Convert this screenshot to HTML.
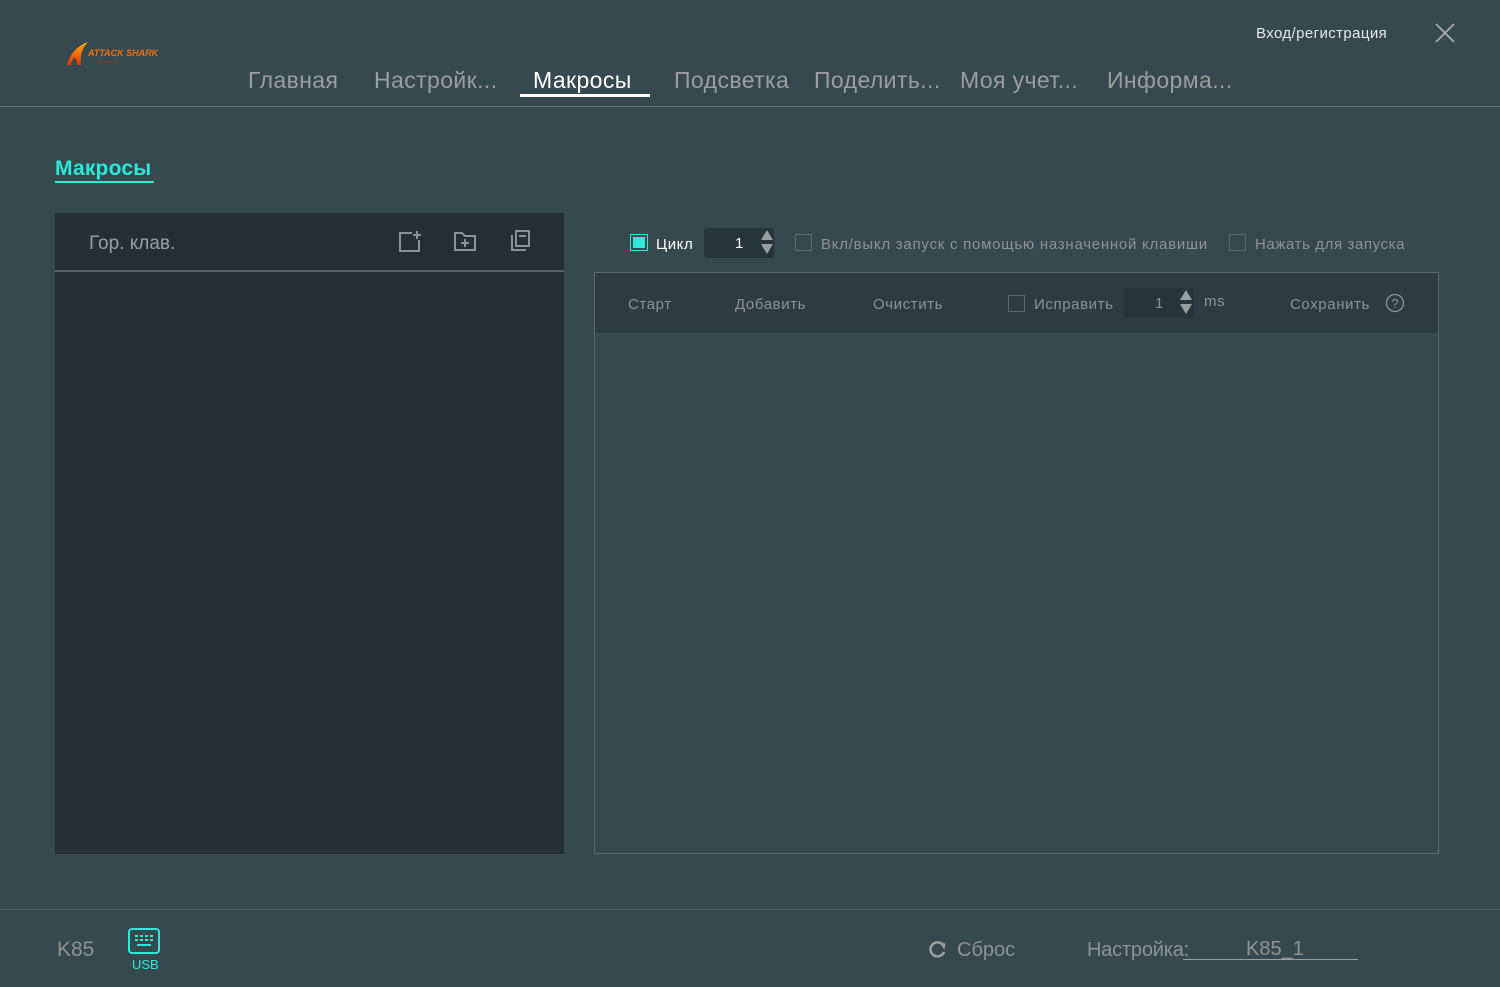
<!DOCTYPE html>
<html><head><meta charset="utf-8"><style>
*{margin:0;padding:0;box-sizing:border-box}
body{width:1500px;height:987px;background:#36494e;font-family:"Liberation Sans",sans-serif;position:relative;overflow:hidden;color:#9aa0a0}
.a{position:absolute;white-space:nowrap}
.nav{top:67px;font-size:23px;color:#9a9e9e;letter-spacing:0.4px}
.s{font-size:15px;letter-spacing:0.6px}
.cb{position:absolute;width:17px;height:17px;border:1px solid #5d6a6c}
</style></head><body>
<svg class="a" style="left:64px;top:40px" width="100" height="30" viewBox="0 0 100 30">
<defs><linearGradient id="g" x1="0" y1="0" x2="0" y2="1"><stop offset="0" stop-color="#ffb000"/><stop offset="1" stop-color="#e8300a"/></linearGradient></defs>
<path d="M3 25 C6 15 12 6 24 2 C18 8 16 16 17 25 L13 25 C13 20 12 18 10 18 C8 20 7 23 7 25Z" fill="url(#g)"/>
<text x="24" y="16" font-size="9" font-weight="bold" font-style="italic" fill="#f07010" font-family="Liberation Sans">ATTACK SHARK</text>
<path d="M34 22 h20" stroke="#c03010" stroke-width="1" stroke-dasharray="2 1"/>
</svg>
<div class="a nav" style="left:248px">Главная</div>
<div class="a nav" style="left:374px">Настройк...</div>
<div class="a nav" style="left:533px;color:#fff">Макросы</div>
<div class="a" style="left:520px;top:94px;width:130px;height:3px;background:#fff"></div>
<div class="a nav" style="left:674px">Подсветка</div>
<div class="a nav" style="left:814px">Поделить...</div>
<div class="a nav" style="left:960px">Моя учет...</div>
<div class="a nav" style="left:1107px">Информа...</div>
<div class="a" style="left:1256px;top:25px;font-size:15px;color:#e4e8e8;letter-spacing:0.4px">Вход/регистрация</div>
<svg class="a" style="left:1435px;top:23px" width="20" height="20"><path d="M1 1L19 19M19 1L1 19" stroke="#a9adad" stroke-width="1.8"/></svg>
<div class="a" style="left:0;top:106px;width:1500px;height:1px;background:#6a7274"></div>

<div class="a" style="left:55px;top:157px;font-size:21px;font-weight:bold;color:#2ee8d8;letter-spacing:0.2px">Макросы</div>
<div class="a" style="left:55px;top:181px;width:99px;height:2px;background:#2ee8d8"></div>

<div class="a" style="left:55px;top:213px;width:509px;height:641px;background:#242f35"></div>
<div class="a" style="left:55px;top:270px;width:509px;height:2px;background:#5b6466"></div>
<div class="a" style="left:89px;top:233px;font-size:19px;color:#9a9e9e">Гор. клав.</div>
<svg class="a" style="left:398px;top:230px" width="135" height="24" fill="none" stroke="#8d9393" stroke-width="2">
<path d="M14 3H2V21H21V10"/><path d="M19 1V9M15 5H23"/>
<path d="M57 3H64L67 6H77V20H57Z"/><path d="M67 9V17M63 13H71"/>
<path d="M114 5V20H128M118 1H131V16H118Z"/><path d="M121 6H128"/>
</svg>

<div class="a" style="left:630px;top:234px;width:18px;height:17px;border:1px solid #2ee8d8"><div style="margin:2px;width:12px;height:11px;background:#2ee8d8"></div></div>
<div class="a s" style="left:656px;top:236px;color:#fff">Цикл</div>
<div class="a" style="left:704px;top:228px;width:70px;height:30px;background:#26353a;border-radius:3px"></div>
<div class="a" style="left:735px;top:235px;font-size:15px;color:#fff">1</div>
<svg class="a" style="left:760px;top:229px" width="14" height="28" fill="#9aa0a0"><path d="M7 1L13 11H1Z"/><path d="M1 15H13L7 25Z"/></svg>
<div class="cb" style="left:795px;top:234px"></div>
<div class="a s" style="left:821px;top:236px;color:#8d9394;letter-spacing:0.75px">Вкл/выкл запуск с помощью назначенной клавиши</div>
<div class="cb" style="left:1229px;top:234px"></div>
<div class="a s" style="left:1255px;top:236px;color:#8d9394">Нажать для запуска</div>

<div class="a" style="left:594px;top:272px;width:845px;height:582px;border:1px solid #5d6a6c"></div>
<div class="a" style="left:595px;top:273px;width:843px;height:60px;background:#2c3c41"></div>
<div class="a s" style="left:628px;top:296px;color:#8d9394">Старт</div>
<div class="a s" style="left:735px;top:296px;color:#8d9394">Добавить</div>
<div class="a s" style="left:873px;top:296px;color:#8d9394">Очистить</div>
<div class="cb" style="left:1008px;top:295px"></div>
<div class="a s" style="left:1034px;top:296px;color:#8d9394">Исправить</div>
<div class="a" style="left:1124px;top:288px;width:70px;height:30px;background:#26353a;border-radius:3px"></div>
<div class="a" style="left:1155px;top:295px;font-size:15px;color:#8d9394">1</div>
<svg class="a" style="left:1179px;top:289px" width="14" height="28" fill="#9aa0a0"><path d="M7 1L13 11H1Z"/><path d="M1 15H13L7 25Z"/></svg>
<div class="a s" style="left:1204px;top:293px;color:#8d9394">ms</div>
<div class="a s" style="left:1290px;top:296px;color:#8d9394">Сохранить</div>
<svg class="a" style="left:1385px;top:293px" width="20" height="20"><circle cx="10" cy="10" r="8.5" fill="none" stroke="#8d9394" stroke-width="1.3"/><text x="10" y="15" font-size="13" text-anchor="middle" fill="#8d9394" font-family="Liberation Sans">?</text></svg>

<div class="a" style="left:0;top:909px;width:1500px;height:1px;background:#4f5d60"></div>
<div class="a" style="left:57px;top:938px;font-size:21px;color:#8d9394">K85</div>
<svg class="a" style="left:128px;top:928px" width="32" height="27" fill="none" stroke="#2ee8d8" stroke-width="2"><rect x="1" y="1" width="30" height="24" rx="3"/><path d="M7 8h3M12 8h3M17 8h3M22 8h3M7 12h3M12 12h3M17 12h3M22 12h3M9 17h14"/></svg>
<div class="a" style="left:132px;top:957px;font-size:13px;color:#2ee8d8">USB</div>
<svg class="a" style="left:929px;top:940px" width="18" height="18" fill="none" stroke="#9aa0a0" stroke-width="2.5"><path d="M14 5A7 7 0 1 0 15 12"/><path d="M10 2L16 4L15 9" fill="#9aa0a0" stroke-width="1"/></svg>
<div class="a" style="left:957px;top:939px;font-size:20px;color:#8d9394">Сброс</div>
<div class="a" style="left:1087px;top:939px;font-size:20px;color:#8d9394;letter-spacing:-0.2px">Настройка:</div>
<div class="a" style="left:1246px;top:938px;font-size:20px;color:#8d9394">K85_1</div>
<div class="a" style="left:1183px;top:959px;width:175px;height:1px;background:#9aa0a0"></div>
</body></html>
